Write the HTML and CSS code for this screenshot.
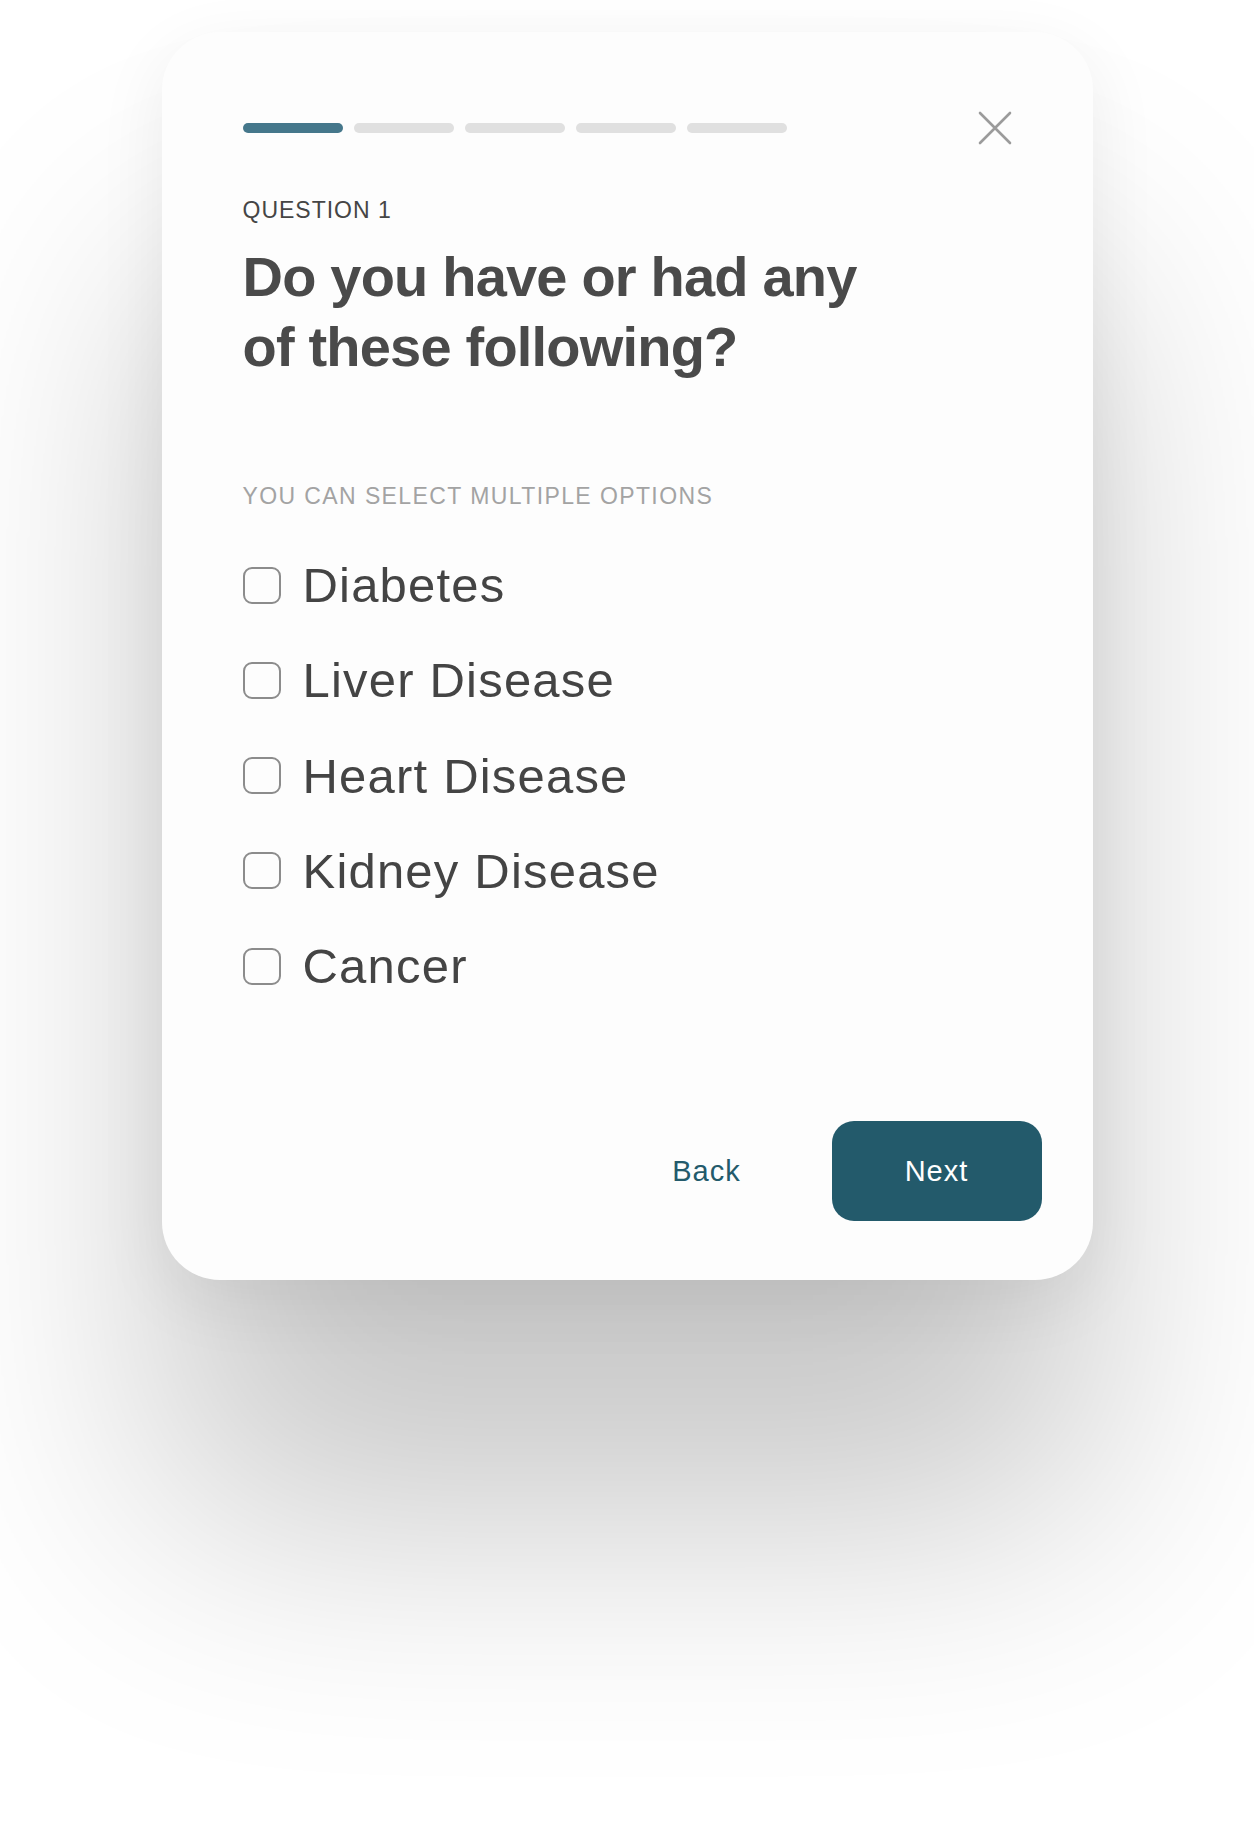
FILE: index.html
```html
<!DOCTYPE html>
<html lang="en">
<head>
<meta charset="utf-8">
<title>Question 1</title>
<link rel="stylesheet" href="styles.css">
</head>
<body>
<main class="stage">
  <section class="card">
    <header class="card-head">
      <div class="progress">
        <span class="seg seg-active"></span>
        <span class="seg"></span>
        <span class="seg"></span>
        <span class="seg"></span>
        <span class="seg"></span>
      </div>
      <button class="close" aria-label="Close">
        <svg viewBox="0 0 34 34" width="34" height="34">
          <path d="M2 2 L32 32 M32 2 L2 32" stroke="#9b9b9b" stroke-width="2.6" stroke-linecap="round" fill="none"/>
        </svg>
      </button>
    </header>

    <p class="eyebrow">QUESTION 1</p>
    <h1 class="title">Do you have or had any of these following?</h1>

    <p class="hint">YOU CAN SELECT MULTIPLE OPTIONS</p>

    <ul class="options">
      <li class="option"><span class="box"></span><span class="label">Diabetes</span></li>
      <li class="option"><span class="box"></span><span class="label">Liver Disease</span></li>
      <li class="option"><span class="box"></span><span class="label">Heart Disease</span></li>
      <li class="option"><span class="box"></span><span class="label">Kidney Disease</span></li>
      <li class="option"><span class="box"></span><span class="label">Cancer</span></li>
    </ul>

    <footer class="actions">
      <button class="btn btn-back">Back</button>
      <button class="btn btn-next">Next</button>
    </footer>
  </section>
</main>
</body>
</html>
```

FILE: styles.css
```css
* { box-sizing: border-box; }

html, body {
  margin: 0;
  padding: 0;
  background: #ffffff;
  font-family: "Liberation Sans", Arial, sans-serif;
}

.stage {
  display: flex;
  justify-content: center;
  align-items: flex-start;
  padding-top: 32px;
  min-height: 1842px;
}

.card {
  width: 931px;
  background: #fdfdfd;
  border-radius: 58px;
  padding: 80px 51px 59px 81px;
  box-shadow:
    0 240px 280px rgba(0, 0, 0, 0.22),
    0 20px 70px rgba(0, 0, 0, 0.07);
}

.card-head {
  display: flex;
  align-items: center;
  justify-content: space-between;
  height: 32px;
  padding-right: 30px;
}

.progress {
  display: flex;
  gap: 11px;
}

.seg {
  width: 100px;
  height: 10px;
  border-radius: 5px;
  background: #e0e0e0;
}

.seg-active { background: #45778b; }

.close {
  width: 34px;
  height: 34px;
  padding: 0;
  border: 0;
  background: transparent;
  display: flex;
}

.eyebrow {
  margin: 52px 0 0;
  font-size: 23px;
  line-height: 28px;
  letter-spacing: 1px;
  color: #454545;
}

.title {
  margin: 18px 0 0;
  max-width: 640px;
  font-size: 56px;
  line-height: 70px;
  font-weight: 700;
  letter-spacing: -0.8px;
  color: #4a4a4a;
}

.hint {
  margin: 100px 0 0;
  font-size: 23px;
  line-height: 28px;
  letter-spacing: 1.4px;
  color: #a3a3a3;
}

.options {
  list-style: none;
  margin: 47px 0 0;
  padding: 0;
  display: flex;
  flex-direction: column;
  gap: 39.3px;
}

.option {
  display: flex;
  align-items: center;
  height: 56px;
}

.box {
  width: 38px;
  height: 37px;
  border: 2.5px solid #8c8c8c;
  border-radius: 9px;
  flex: none;
}

.label {
  margin-left: 22px;
  font-size: 49px;
  line-height: 56px;
  letter-spacing: 1.2px;
  color: #444444;
}

.actions {
  margin-top: 127px;
  display: flex;
  justify-content: flex-end;
  gap: 20px;
}

.btn {
  width: 210px;
  height: 100px;
  border: 0;
  border-radius: 22px;
  font-family: "Liberation Sans", Arial, sans-serif;
  font-size: 29px;
  letter-spacing: 1px;
  cursor: pointer;
}

.btn-back {
  background: transparent;
  color: #235a6b;
}

.btn-next {
  background: #235a6b;
  color: #ffffff;
}
```
